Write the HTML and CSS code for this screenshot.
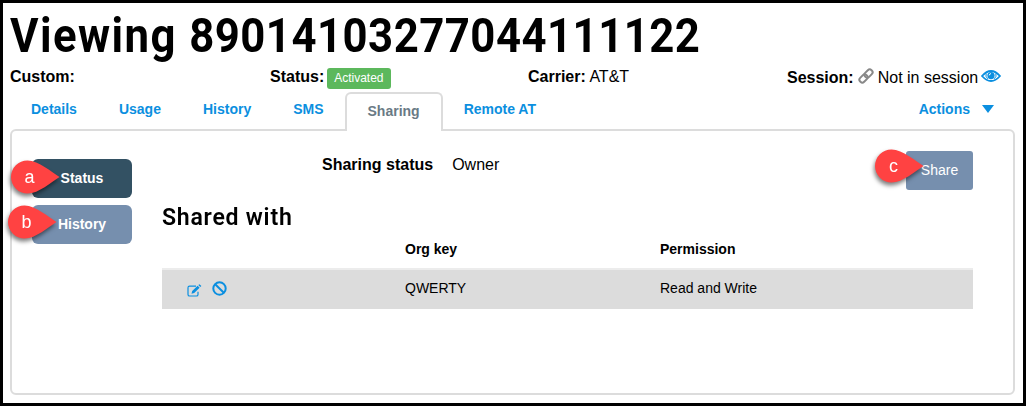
FILE: index.html
```html
<!DOCTYPE html>
<html lang="en">
<head>
    <meta charset="UTF-8">
    <meta name="viewport" content="width=device-width, initial-scale=1.0">
    <title>Viewing 89014103277044111122</title>
    <link rel="stylesheet" href="styles.css">
</head>
<body>
    <div class="page">
        <h1><span class="title-word">Viewing</span> <span class="title-number">89014103277044111122</span></h1>

        <div class="info">
            <div><b>Custom:</b></div>
            <div><b>Status:</b> <span class="label">Activated</span></div>
            <div><b>Carrier:</b> AT&amp;T</div>
            <div class="session">
                <b>Session:</b>
                <svg class="link-icon" viewBox="0 0 16 16" width="16" height="16">
                    <g fill="none" stroke="#888" stroke-width="2" transform="rotate(-45 8 8)">
                        <rect x="0" y="5.2" width="9" height="5.6" rx="2.6"/>
                        <rect x="7" y="5.2" width="9" height="5.6" rx="2.6"/>
                    </g>
                </svg>
                <span>Not in session</span>
                <svg class="eye-icon" viewBox="0 0 20 12" width="20" height="12">
                    <path d="M1 6 Q10 -4 19 6 Q10 16 1 6Z" fill="none" stroke="#0b8fe0" stroke-width="1.8"/>
                    <circle cx="10" cy="5.6" r="3.6" fill="#0b8fe0"/>
                    <path d="M8.2 5.4 Q8.4 3.7 10 3.6" fill="none" stroke="#fff" stroke-width="1"/>
                    <path d="M5.2 3.6 Q4 6.5 6.8 8.8 M14.8 3.6 Q16 6.5 13.2 8.8" fill="none" stroke="#0b8fe0" stroke-width="1"/>
                </svg>
            </div>
        </div>

        <div class="tabs">
            <a class="tab">Details</a>
            <a class="tab">Usage</a>
            <a class="tab">History</a>
            <a class="tab">SMS</a>
            <a class="tab active">Sharing</a>
            <a class="tab">Remote AT</a>
            <a class="actions">Actions <span class="caret"></span></a>
        </div>

        <div class="panel">
            <div class="side">
                <div class="side-button selected">Status
                    <div class="marker marker-a">
                        <svg viewBox="0 0 49 34" width="49" height="34"><path d="M48.5 17 C40 12 28 0.5 16.5 0.5 A16.5 16.5 0 0 0 16.5 33.5 C28 33.5 40 22 48.5 17Z" fill="#ff4242"/></svg>
                        <span>a</span>
                    </div>
                </div>
                <div class="side-button">History
                    <div class="marker marker-b">
                        <svg viewBox="0 0 49 34" width="49" height="34"><path d="M48.5 17 C40 12 28 0.5 16.5 0.5 A16.5 16.5 0 0 0 16.5 33.5 C28 33.5 40 22 48.5 17Z" fill="#ff4242"/></svg>
                        <span>b</span>
                    </div>
                </div>
            </div>

            <div class="content">
                <div class="sharing-row">
                    <b>Sharing status</b>
                    <span class="owner">Owner</span>
                    <div class="share-button">Share
                        <div class="marker marker-c">
                            <svg viewBox="0 0 49 34" width="49" height="34"><path d="M48.5 17 C40 12 28 0.5 16.5 0.5 A16.5 16.5 0 0 0 16.5 33.5 C28 33.5 40 22 48.5 17Z" fill="#ff4242"/></svg>
                            <span>c</span>
                        </div>
                    </div>
                </div>

                <h2>Shared with</h2>

                <div class="table-row table-head">
                    <div></div>
                    <div>Org key</div>
                    <div>Permission</div>
                </div>
                <div class="table-row table-body">
                    <div class="row-icons">
                        <svg class="edit-icon" viewBox="0 0 15 13" width="15" height="13">
                            <path d="M9 2.2H2.6Q1 2.2 1 3.8V10.4Q1 12 2.6 12H9.4Q11 12 11 10.4V7.8" fill="none" stroke="#0b8fe0" stroke-width="1.2"/>
                            <path d="M4.5 9.8L5.2 7L10.6 1.8L12.6 3.8L7.2 9Z M11.3 1.1L12.4 0.2L14.4 2.1L13.3 3.1Z" fill="#0b8fe0"/>
                        </svg>
                        <svg class="ban-icon" viewBox="0 0 15 15" width="15" height="15">
                            <circle cx="7.5" cy="7.5" r="6.2" fill="none" stroke="#0b8fe0" stroke-width="2"/>
                            <path d="M3.2 3.2L11.8 11.8" stroke="#0b8fe0" stroke-width="2"/>
                        </svg>
                    </div>
                    <div>QWERTY</div>
                    <div>Read and Write</div>
                </div>
            </div>
        </div>
    </div>
</body>
</html>
```
FILE: styles.css
```css
* {
    box-sizing: border-box;
}
body {
    margin: 0;
    font-family: "Liberation Sans", Arial, sans-serif;
    font-size: 16px;
    color: #000;
    background-color: #fff;
}
.page {
    width: 1026px;
    height: 406px;
    padding: 7px 8px 0 7px;
    border: 3px solid #000;
    overflow: hidden;
}
h1 {
    margin: 0;
    height: 56px;
    font-family: Roboto, sans-serif;
    font-size: 48px;
    font-weight: 700;
    line-height: 51px;
    white-space: nowrap;
    transform: scaleX(0.91);
    transform-origin: left;
}
.title-word {
    letter-spacing: 1.6px;
}
.title-number {
    margin-left: 1.5px;
    letter-spacing: 0.55px;
}
.info {
    display: grid;
    grid-template-columns: 260px 258px 259px 1fr;
    height: 26px;
    line-height: 21px;
    white-space: nowrap;
}
.label {
    display: inline-block;
    height: 21px;
    margin-left: -2px;
    padding: 0 7.5px;
    border-radius: 3px;
    background-color: #5cb85c;
    color: #fff;
    font-size: 12px;
    line-height: 20px;
}
.session {
    display: flex;
    padding-top: 1px;
}
.link-icon {
    margin: 1px 4px 0 4px;
}
.eye-icon {
    margin: 3px 0 0 3px;
}
.tabs {
    display: flex;
    height: 37px;
    font-size: 14px;
    font-weight: bold;
    line-height: 34px;
}
.tab {
    padding: 0 21px;
    color: #0b8fe0;
}
.tab.active {
    z-index: 1;
    height: 39px;
    border: 2px solid #dcdcdc;
    border-bottom: none;
    border-radius: 6px 6px 0 0;
    background-color: #fff;
    color: #6a7a85;
}
.actions {
    display: flex;
    align-items: center;
    margin-left: auto;
    padding-right: 21px;
    color: #0b8fe0;
    height: 34px;
}
.caret {
    margin-left: 12px;
    border: 6px solid transparent;
    border-top: 8px solid #0b8fe0;
    border-bottom: none;
}
.panel {
    display: flex;
    width: 1005px;
    height: 266px;
    padding: 20px 40px 0 20px;
    border: 2px solid #dcdcdc;
    border-radius: 6px;
}
.side {
    width: 130px;
    padding-top: 8px;
}
.side-button {
    position: relative;
    width: 100px;
    height: 39px;
    margin-bottom: 7px;
    border-radius: 6px;
    background-color: #768fae;
    color: #fff;
    font-size: 14px;
    font-weight: bold;
    line-height: 38px;
    text-align: center;
}
.side-button.selected {
    background-color: #335163;
}
.content {
    width: 811px;
}
.sharing-row {
    display: flex;
    height: 39px;
    padding-left: 160px;
    line-height: 27px;
}
.owner {
    margin-left: 19px;
}
.share-button {
    position: relative;
    width: 67px;
    height: 39px;
    margin-left: auto;
    border-radius: 3px;
    background-color: #768fae;
    color: #fff;
    font-size: 14px;
    line-height: 38px;
    text-align: center;
}
h2 {
    margin: 11px 0 0 0;
    height: 32px;
    font-family: Roboto, sans-serif;
    font-size: 24px;
    font-weight: 600;
    line-height: 32px;
    letter-spacing: 0.8px;
    transform: scaleX(0.96);
    transform-origin: left;
}
.table-row {
    display: grid;
    grid-template-columns: 243px 255px 1fr;
    font-size: 14px;
}
.table-head {
    height: 35px;
    font-weight: bold;
    line-height: 32px;
}
.table-body {
    height: 41px;
    border-top: 2px solid #ececec;
    background-color: #dcdcdc;
    line-height: 37px;
}
.row-icons {
    display: flex;
    padding: 11px 0 0 25px;
}
.edit-icon {
    margin-top: 3px;
}
.ban-icon {
    margin-left: 10px;
}
/* callout pins lie over the buttons */
.marker {
    position: absolute;
    width: 49px;
    height: 34px;
    filter: drop-shadow(-1px 3px 2px rgba(0, 0, 0, 0.5));
}
.marker svg {
    display: block;
}
.marker span {
    position: absolute;
    top: 0;
    left: 0;
    width: 37px;
    font-size: 18px;
    font-weight: 400;
    line-height: 34px;
    text-align: center;
}
.marker-a {
    top: 1px;
    left: -21px;
}
.marker-b {
    top: 0;
    left: -24px;
}
.marker-c {
    top: -2px;
    left: -31px;
}
```
